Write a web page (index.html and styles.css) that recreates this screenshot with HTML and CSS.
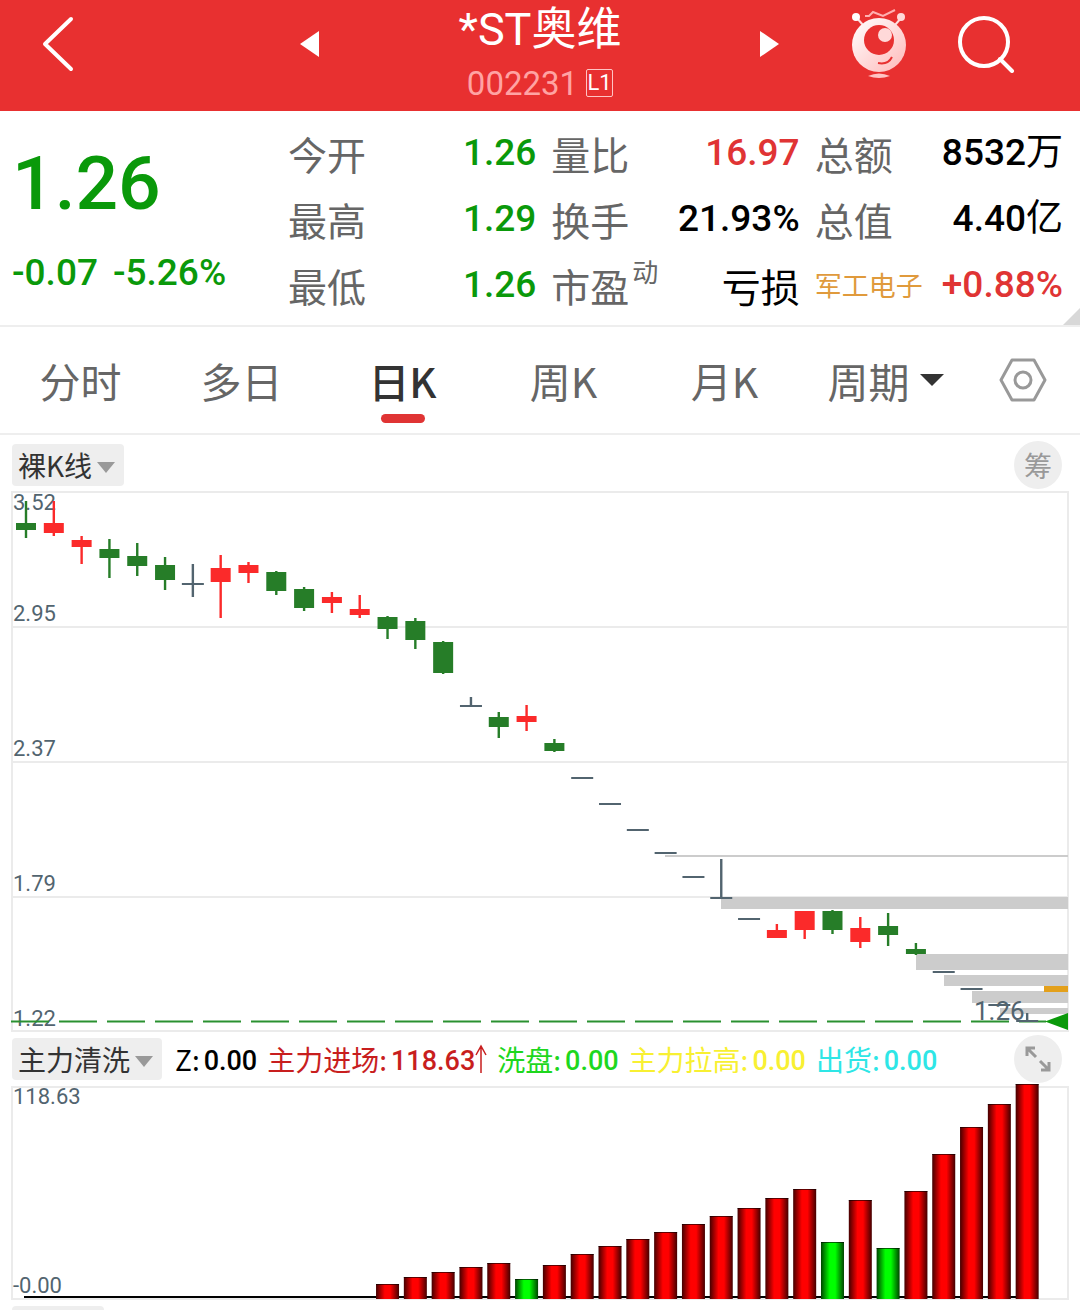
FILE: index.html
```html
<!DOCTYPE html>
<html lang="zh-CN">

<head>
    <meta charset="UTF-8" />
    <meta name="viewport" content="width=device-width, initial-scale=1.0">
    <title>*ST奥维 002231</title>
    <link rel="stylesheet" href="styles.css">
</head>

<body>
    <header class="topbar">
        <button class="icon-btn back" aria-label="返回">
            <svg width="32" height="56" viewBox="0 0 32 56">
                <path d="M29 3 L3 28 L29 53" fill="none" stroke="#fff" stroke-width="4" stroke-linecap="round" stroke-linejoin="round" />
            </svg>
        </button>
        <div class="stock-nav">
            <button class="icon-btn" aria-label="上一只">
                <svg width="20" height="28" viewBox="0 0 20 28"><path d="M0 14 L19 1 V27 Z" fill="#fff" /></svg>
            </button>
            <div class="stock-title">
                <h1>*ST奥维</h1>
                <p><span class="code">002231</span><span class="level">L1</span></p>
            </div>
            <button class="icon-btn" aria-label="下一只">
                <svg width="20" height="28" viewBox="0 0 20 28"><path d="M19 14 L0 1 V27 Z" fill="#fff" /></svg>
            </button>
        </div>
        <div class="actions">
            <button class="icon-btn" aria-label="助手">
                <svg width="56" height="70" viewBox="0 0 56 70">
                    <defs>
                        <linearGradient id="face" x1="0" y1="0" x2="1" y2="1">
                            <stop offset="0" stop-color="#fff" />
                            <stop offset="1" stop-color="#ffb9b9" />
                        </linearGradient>
                    </defs>
                    <path d="M5 8 L12 16 M51 8 L44 16" stroke="#ffdede" stroke-width="2" />
                    <circle cx="5" cy="8" r="4" fill="#fff" />
                    <circle cx="50" cy="8" r="4" fill="#ffd9d9" />
                    <path d="M14 7 H18 L22 3 L32 7 L44 1" fill="none" stroke="#ffb0b0" stroke-width="2" />
                    <circle cx="28" cy="36" r="27" fill="url(#face)" />
                    <circle cx="28" cy="31" r="15" fill="#e83030" />
                    <circle cx="34" cy="26" r="7" fill="#ffd9d9" />
                    <path d="M27 54 Q37 56 41 48" fill="none" stroke="#e83030" stroke-width="2" />
                    <path d="M17 67 Q28 62 39 67 Q28 71 17 67 Z" fill="#ffc4c4" />
                </svg>
            </button>
            <button class="icon-btn" aria-label="搜索">
                <svg width="58" height="58" viewBox="0 0 58 58">
                    <g fill="none" stroke="#fff" stroke-width="4" stroke-linecap="round">
                        <circle cx="27" cy="27" r="24" />
                        <path d="M43 44 L55 56" />
                    </g>
                </svg>
            </button>
        </div>
    </header>

    <section class="quote">
        <div class="price down">
            <strong>1.26</strong>
            <p><span>-0.07</span><span>-5.26%</span></p>
        </div>
        <dl class="stats">
            <div><dt>今开</dt><dd class="down">1.26</dd></div>
            <div><dt>量比</dt><dd class="up">16.97</dd></div>
            <div><dt>总额</dt><dd>8532<span>万</span></dd></div>
            <div><dt>最高</dt><dd class="down">1.29</dd></div>
            <div><dt>换手</dt><dd>21.93%</dd></div>
            <div><dt>总值</dt><dd>4.40<span>亿</span></dd></div>
            <div><dt>最低</dt><dd class="down">1.26</dd></div>
            <div><dt>市盈<sup>动</sup></dt><dd class="word">亏损</dd></div>
            <div><dt class="sector">军工电子</dt><dd class="up">+0.88%</dd></div>
        </dl>
    </section>

    <nav class="tabs">
        <button>分时</button>
        <button>多日</button>
        <button class="active">日K</button>
        <button>周K</button>
        <button>月K</button>
        <div class="period">
            <select aria-label="周期">
                <option>周期</option>
            </select>
        </div>
        <button class="settings" aria-label="设置">
            <svg width="48" height="44" viewBox="0 0 48 44">
                <g fill="none" stroke="#999" stroke-width="3" stroke-linejoin="round">
                    <path d="M13 2 H35 L46 22 L35 42 H13 L2 22 Z" />
                    <circle cx="24" cy="22" r="8" />
                </g>
            </svg>
        </button>
    </nav>

    <main>
        <div class="toolbar">
            <div class="picker">
                <select aria-label="主图指标">
                    <option>裸K线</option>
                </select>
            </div>
            <button class="round">筹</button>
        </div>
        <svg class="chart" id="kline" viewBox="0 0 1080 541" role="img" aria-label="日K线"></svg>

        <div class="toolbar sub">
            <div class="picker">
                <select aria-label="副图指标">
                    <option>主力清洗</option>
                </select>
            </div>
            <ul class="legend">
                <li>Z:<b>0.00</b></li>
                <li class="enter">主力进场:<b>118.63</b><svg width="12" height="30" viewBox="0 0 12 30"><path d="M6 29 V2 M1 11 L6 2 L11 11" fill="none" stroke="currentColor" stroke-width="1.5" /></svg></li>
                <li class="wash">洗盘:<b>0.00</b></li>
                <li class="pull">主力拉高:<b>0.00</b></li>
                <li class="ship">出货:<b>0.00</b></li>
            </ul>
            <button class="round" aria-label="全屏">
                <svg width="26" height="26" viewBox="0 0 26 26">
                    <path d="M2 10 V2 H10 M2 2 L11 11 M15 15 L24 24 M24 16 V24 H16" fill="none" stroke="#999" stroke-width="3" />
                </svg>
            </button>
        </div>
        <svg class="chart" id="volume" viewBox="0 0 1080 216" role="img" aria-label="主力清洗"></svg>
        <div class="next-panel"><span></span></div>
    </main>

    <script src="chart.js"></script>
</body>

</html>
```

FILE: styles.css
```css
* {
    box-sizing: border-box;
}

body {
    margin: 0;
    background: #fff;
    color: #000;
    font-family: "Noto Sans CJK SC", sans-serif;
}

h1,
p,
dl,
dd,
ul {
    margin: 0;
    padding: 0;
}

button,
select {
    font-family: inherit;
    border: none;
    background: none;
    padding: 0;
    cursor: pointer;
}

select {
    appearance: none;
    outline: none;
}

svg {
    display: block;
}

.up {
    color: #e03434;
}

.down {
    color: #0a990a;
}

/* top bar */
.topbar {
    display: grid;
    grid-template-columns: 1fr 480px 1fr;
    height: 111px;
    background: #e83030;
    color: #fff;
}

.icon-btn {
    display: flex;
    align-items: center;
}

.back {
    padding-left: 42px;
    padding-bottom: 24px;
}

.stock-nav {
    display: flex;
    justify-content: space-between;
}

.stock-nav .icon-btn,
.actions {
    padding-bottom: 24px;
}

.stock-title {
    text-align: center;
}

.stock-title h1 {
    font-family: Roboto, "Noto Sans CJK SC", sans-serif;
    font-size: 45px;
    font-weight: 400;
    line-height: 60px;
}

.stock-title p {
    display: flex;
    justify-content: center;
    align-items: center;
    gap: 8px;
    height: 46px;
    font-family: Roboto, sans-serif;
}

.code {
    font-size: 33px;
    color: #ffa3a3;
}

.level {
    width: 27px;
    height: 28px;
    border: 1px solid #ffc4c4;
    border-radius: 2px;
    font-size: 22px;
    line-height: 26px;
}

.actions {
    display: flex;
    justify-content: flex-end;
    align-items: center;
    gap: 50px;
    padding-right: 65px;
}

/* quote */
.quote {
    position: relative;
    display: flex;
    padding: 9px 17px 7px 12px;
    border-bottom: 2px solid #eee;
}

.quote::after {
    content: "";
    position: absolute;
    right: 0;
    bottom: 0;
    border-left: 17px solid transparent;
    border-bottom: 17px solid #d8d8d8;
}

.price {
    width: 276px;
    font-family: Roboto, sans-serif;
    font-weight: 500;
}

.price strong {
    display: block;
    font-size: 75px;
    font-weight: 500;
    line-height: 126px;
}

.price p {
    display: flex;
    gap: 15px;
    font-size: 37px;
    line-height: 54px;
}

.stats {
    flex: 1;
    display: grid;
    grid-template-columns: repeat(3, 1fr);
    column-gap: 15px;
}

.stats div {
    display: flex;
    justify-content: space-between;
    align-items: center;
    height: 66px;
    white-space: nowrap;
}

.stats dt {
    font-size: 39px;
    line-height: 66px;
    color: #666;
}

.stats sup {
    margin-left: 3px;
    font-size: 26px;
    line-height: 26px;
    vertical-align: 20px;
}

.stats dt.sector {
    font-size: 27px;
    color: #e09a3c;
}

.stats dd {
    font-family: Roboto, "Noto Sans CJK SC", sans-serif;
    font-size: 37px;
    font-weight: 500;
    line-height: 66px;
}

.stats dd span {
    font-weight: 400;
}

.stats dd.word {
    font-family: inherit;
    font-size: 39px;
    font-weight: 400;
}

/* period tabs */
.tabs {
    display: flex;
    height: 108px;
    border-bottom: 2px solid #eee;
}

.tabs button,
.period {
    position: relative;
    flex: 1;
    display: flex;
    justify-content: center;
    align-items: center;
    font-size: 41px;
    color: #666;
}

.tabs .active {
    color: #333;
    font-weight: 500;
}

.tabs .active::after {
    content: "";
    position: absolute;
    bottom: 10px;
    width: 44px;
    height: 9px;
    border-radius: 5px;
    background: #e03434;
}

.period select {
    font-size: 41px;
    color: #666;
}

.period::after {
    content: "";
    margin-left: 10px;
    border: 12px solid transparent;
    border-top-color: #333;
    border-bottom: none;
}

.tabs .settings {
    flex: 0 0 114px;
}

/* charts */
.toolbar {
    display: flex;
    align-items: center;
    height: 56px;
    padding: 4px 18px 0 12px;
}

.toolbar.sub {
    height: 52px;
    padding-top: 2px;
}

.picker {
    position: relative;
}

.picker select {
    height: 42px;
    padding: 0 31px 0 6px;
    border-radius: 4px;
    background: #eee;
    font-size: 28px;
    color: #333;
}

.picker::after {
    content: "";
    position: absolute;
    right: 9px;
    top: 18px;
    border: 9px solid transparent;
    border-top: 11px solid #999;
    border-bottom: none;
    pointer-events: none;
}

.round {
    display: flex;
    justify-content: center;
    align-items: center;
    width: 48px;
    height: 48px;
    margin-left: auto;
    border-radius: 50%;
    background: #eee;
    font-size: 28px;
    color: #999;
}

.legend {
    display: flex;
    gap: 10px;
    margin-left: 13px;
    list-style: none;
    font-size: 28px;
    line-height: 42px;
    white-space: nowrap;
}

.legend li {
    display: flex;
    align-items: center;
}

.legend b {
    margin-left: 4px;
    padding-top: 3px;
    font-family: Roboto, sans-serif;
    font-size: 27px;
    font-weight: 500;
}

.enter {
    color: #c81e1e;
}

.wash {
    color: #1ed71e;
}

.pull {
    color: #f8f032;
}

.ship {
    color: #2ee6e6;
}

.chart {
    width: 100%;
    height: auto;
}

.frame {
    fill: none;
    stroke: #ebebeb;
    stroke-width: 2;
}

.axis,
.last {
    font-family: Roboto, sans-serif;
    font-size: 22px;
    fill: #52646f;
}

.last {
    font-size: 26px;
}

.flat {
    fill: #52646f;
}

.rise {
    fill: #fb2a2a;
}

.fall {
    fill: #267d28;
}

.gap {
    fill: #ccc;
}

.next-panel {
    height: 11px;
    padding: 6px 12px 0;
}

.next-panel span {
    display: block;
    width: 92px;
    height: 5px;
    border-radius: 4px 4px 0 0;
    background: #eee;
}
```

FILE: chart.js
```js
const STEP = 27.81;
const FIRST = 26;

// [type, high, low, open/close top, open/close bottom]
const candles = [
    ['fall', 10, 47, 32, 39], ['rise', 10, 45, 32, 42], ['rise', 45, 73, 49, 56],
    ['fall', 48, 87, 58, 67], ['fall', 52, 85, 65, 75], ['fall', 66, 99, 74, 89],
    ['flat', 73, 106, 92, 94], ['rise', 64, 127, 77, 91], ['rise', 71, 92, 74, 82],
    ['fall', 80, 104, 81, 100], ['fall', 96, 120, 98, 117], ['rise', 101, 122, 106, 112],
    ['rise', 104, 127, 118, 124], ['fall', 125, 148, 126, 138], ['fall', 127, 158, 130, 149],
    ['fall', 150, 183, 151, 182], ['flat', 206, 215, 214, 216], ['fall', 221, 247, 226, 236],
    ['rise', 214, 240, 225, 231], ['fall', 248, 261, 252, 260], ['flat', 286, 288, 286, 288],
    ['flat', 312, 314, 312, 314], ['flat', 338, 340, 338, 340], ['flat', 361, 363, 361, 363],
    ['flat', 385, 387, 385, 387], ['flat', 368, 408, 406, 408], ['flat', 427, 429, 427, 429],
    ['rise', 433, 447, 439, 447], ['rise', 420, 448, 420, 439], ['fall', 419, 443, 420, 439],
    ['rise', 426, 457, 437, 451], ['fall', 422, 455, 435, 444], ['fall', 452, 464, 458, 463],
    ['flat', 480, 482, 480, 482], ['flat', 497, 499, 497, 499], ['flat', 513, 515, 513, 515],
    ['flat', 522, 531, 529, 531]
];

// unfilled gaps: [x, top, height]
const gaps = [
    [665, 364, 2], [721, 406, 12], [916, 463, 16], [944, 484, 11], [972, 500, 12], [1000, 517, 6]
];

// bar tops, starting from the 14th day
const bars = [200, 193, 188, 183, 179, 195, 181, 170, 162, 155, 148, 140, 132, 124, 114, 105, 158, 116, 164, 107, 70, 43, 20, 0];
const greenBars = [5, 16, 18];

function rect(cls, x, y, w, h) {
    return `<rect class="${cls}" x="${x}" y="${y}" width="${w}" height="${h}"/>`;
}

function drawKline() {
    let out = '<rect class="frame" x="12" y="1" width="1056" height="539"/>';
    out += '<path class="frame" d="M12 136H1068M12 271H1068M12 406H1068"/>';
    [['3.52', 19], ['2.95', 130], ['2.37', 265], ['1.79', 400], ['1.22', 535]].forEach(([t, y]) => {
        out += `<text class="axis" x="13" y="${y}">${t}</text>`;
    });
    gaps.forEach(([x, y, h]) => {
        out += rect('gap', x, y, 1068 - x, h);
    });
    out += '<path d="M11 530.5H1046" stroke="#2a9130" stroke-width="2" stroke-dasharray="38 10"/>';
    candles.forEach(([type, high, low, top, bottom], i) => {
        const x = FIRST + STEP * i;
        const w = type === 'flat' ? 22 : 20;
        out += rect(type, x - 1.2, high, 2.4, low - high);
        out += rect(type, x - w / 2, top, w, bottom - top);
    });
    out += '<rect x="1044" y="495" width="24" height="6" fill="#e3a01b"/>';
    out += '<path d="M1045 530.5L1068 522V539Z" fill="#0a990a"/>';
    out += '<text class="last" x="974" y="529">1.26</text>';
    document.getElementById('kline').innerHTML = out;
}

function drawBars() {
    let out = '<defs>';
    [['red', '#f00', '#400'], ['green', '#0f0', '#040']].forEach(([id, mid, edge]) => {
        out += `<linearGradient id="${id}"><stop offset="0" stop-color="${edge}"/><stop offset=".38" stop-color="${mid}"/><stop offset=".62" stop-color="${mid}"/><stop offset="1" stop-color="${edge}"/></linearGradient>`;
    });
    out += '</defs><rect class="frame" x="12" y="3" width="1056" height="212"/>';
    out += '<text class="axis" x="13" y="20">118.63</text><text class="axis" x="13" y="209">-0.00</text>';
    out += '<rect x="24" y="212" width="1014" height="2"/>';
    bars.forEach((y, i) => {
        const x = FIRST + STEP * (i + 13) - 11.5;
        const color = greenBars.includes(i) ? 'green' : 'red';
        out += `<rect x="${x}" y="${y}" width="23" height="${215 - y}" fill="url(#${color})"/>`;
        out += `<rect x="${x}" y="${y}" width="23" height="1" opacity=".6"/>`;
    });
    document.getElementById('volume').innerHTML = out;
}

drawKline();
drawBars();
```
